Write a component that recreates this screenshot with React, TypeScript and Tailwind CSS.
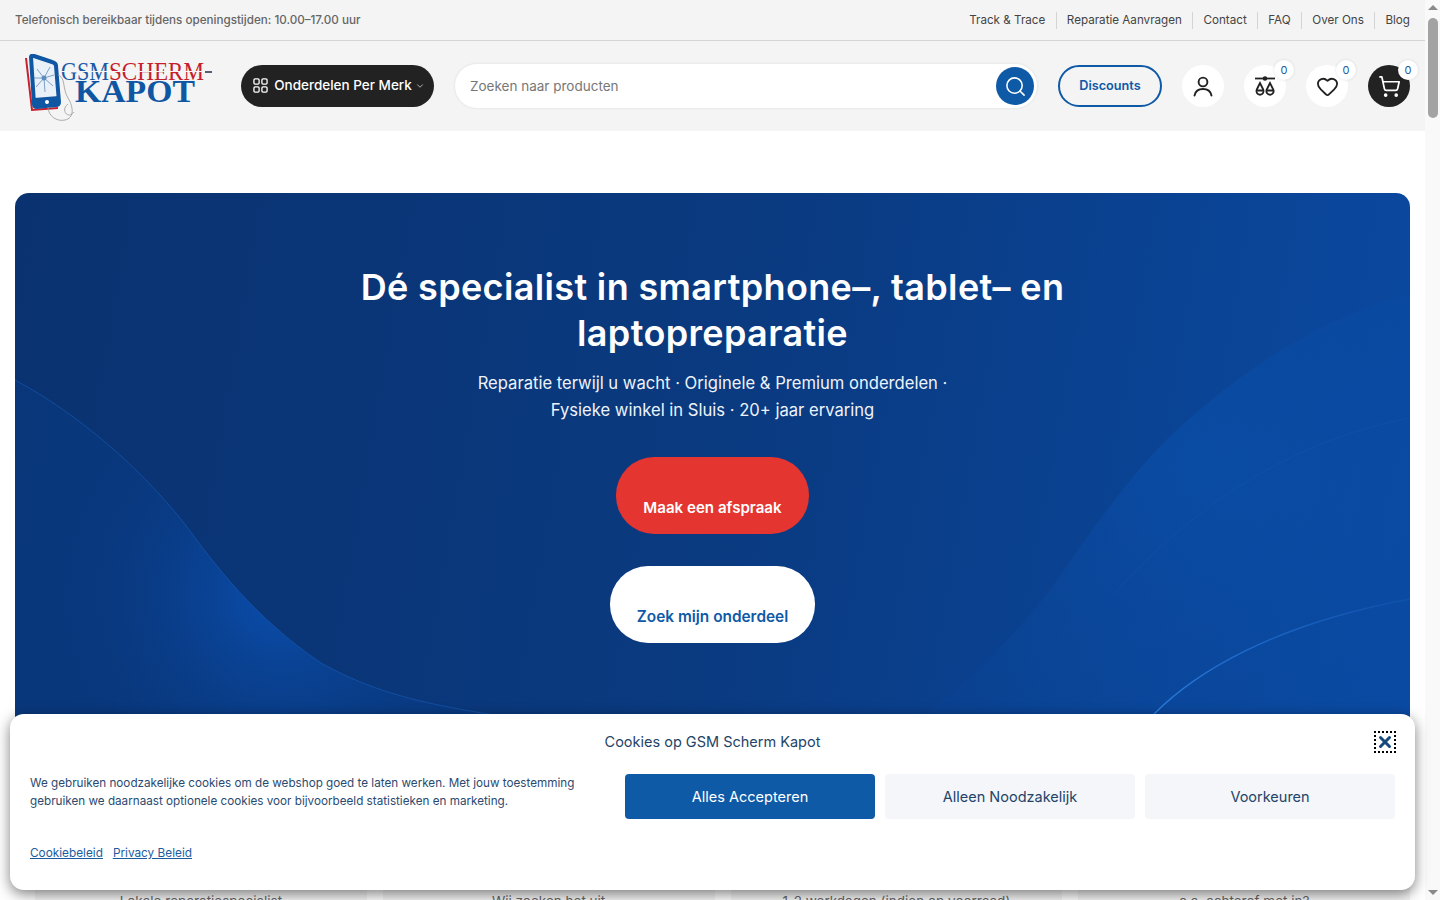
import { ChevronDown, Heart, Search, ShoppingCart, X } from "lucide-react";

const navLinks = ["Track & Trace", "Reparatie Aanvragen", "Contact", "FAQ", "Over Ons", "Blog"];

const Logo = () => (
  <svg width="190" height="70" viewBox="0 0 190 70" className="mt-[6px] shrink-0" aria-label="GSM Scherm Kapot">
    <path d="M2 4 L8 56 L34 54" fill="none" stroke="#c8202f" strokeWidth="2" />
    <path d="M7 3 Q7 1 10 2 L28 8 Q32 9 32 12 L35 48 Q35 51 32 51 L13 53 Q10 53 10 50 Z" fill="#e9f0f7" stroke="#0f56a3" strokeWidth="4" />
    <path d="M10 44 L35 42 L35 49 Q35 51 32 51 L13 53 Q10 53 10 50 Z" fill="#0f56a3" />
    <circle cx="23" cy="48" r="2" fill="#fff" />
    <path d="M20 24 L13 15 M20 24 L26 13 M20 24 L30 21 M20 24 L29 32 M20 24 L21 38 M20 24 L12 33 M20 24 L10 24" stroke="#4e7fb5" strokeWidth="0.7" />
    <circle cx="20" cy="24" r="2.5" fill="#5b8cc0" />
    <path d="M34 21 C42 24 38 34 44 44 C50 54 50 64 41 66 C33 68 24 62 24 53 M44 50 C36 56 44 66 50 58" fill="none" stroke="#9a9a9a" strokeWidth="0.8" />
    <text x="37" y="26" fontFamily="'Liberation Serif', serif" fontSize="25" fill="#1a5aa5" textLength="48" lengthAdjust="spacingAndGlyphs">GSM</text>
    <text x="85" y="26" fontFamily="'Liberation Serif', serif" fontSize="25" fill="#c41f2d" textLength="95" lengthAdjust="spacingAndGlyphs">SCHERM</text>
    <rect x="37" y="17" width="143" height="1" fill="#f4f4f4" />
    <rect x="181" y="17" width="7" height="2" fill="#55606e" />
    <text x="51" y="48" fontFamily="'Liberation Serif', serif" fontSize="31" fontWeight="700" fill="#0f56a3" textLength="120" lengthAdjust="spacingAndGlyphs">KAPOT</text>
  </svg>
);

const GridIcon = () => (
  <svg width="15" height="15" viewBox="0 0 16 16" fill="none" stroke="#fff" strokeWidth="1.4">
    <rect x="1" y="1" width="5.5" height="5.5" rx="1.2" />
    <rect x="9.5" y="1" width="5.5" height="5.5" rx="1.2" />
    <rect x="1" y="9.5" width="5.5" height="5.5" rx="1.2" />
    <rect x="9.5" y="9.5" width="5.5" height="5.5" rx="1.2" />
  </svg>
);

const UserIcon = () => (
  <svg width="22" height="22" viewBox="0 0 22 22" fill="none" stroke="#222" strokeWidth="1.9" strokeLinecap="round">
    <circle cx="11" cy="7" r="4.4" />
    <path d="M2.5 20.5 C3.5 15.5 7 14 11 14 C15 14 18.5 15.5 19.5 20.5" />
  </svg>
);

const CompareIcon = () => (
  <svg width="22" height="22" viewBox="0 0 22 22" fill="none" stroke="#222" strokeWidth="1.8">
    <path d="M1 3.5 H21" />
    <circle cx="11" cy="3.5" r="1.4" fill="#222" />
    <path d="M6 8 L2.8 14.5 A3.6 3.6 0 1 0 9.2 14.5 Z" />
    <path d="M16 8 L12.8 14.5 A3.6 3.6 0 1 0 19.2 14.5 Z" />
    <path d="M2.6 15.5 H9.4 M12.6 15.5 H19.4" />
  </svg>
);

const Badge = () => (
  <span className="absolute -top-[5px] -right-[8px] flex h-5 w-5 items-center justify-center rounded-full bg-white text-[11px] text-[#1b5c9e] shadow-[0_0_3px_rgba(0,0,0,0.12)]">0</span>
);

const RoundButton = ({ children, dark, badge }: { children: React.ReactNode; dark?: boolean; badge?: boolean }) => (
  <div className={`relative flex h-[42px] w-[42px] items-center justify-center rounded-full ${dark ? "bg-[#222222]" : "bg-white"}`}>
    {children}
    {badge && <Badge />}
  </div>
);

const HeroArt = () => (
  <svg className="absolute inset-0 h-full w-full" viewBox="0 0 1395 650" preserveAspectRatio="none" fill="none">
    <defs>
      <radialGradient id="glowLeft" gradientUnits="userSpaceOnUse" cx="265" cy="400" r="230">
        <stop offset="0" stopColor="#0a52b8" stopOpacity="0.85" />
        <stop offset="0.55" stopColor="#0a479e" stopOpacity="0.3" />
        <stop offset="1" stopColor="#0a3a80" stopOpacity="0" />
      </radialGradient>
      <radialGradient id="glowRight" gradientUnits="userSpaceOnUse" cx="1180" cy="270" r="420">
        <stop offset="0" stopColor="#0a55b5" stopOpacity="0.45" />
        <stop offset="1" stopColor="#0a4aa3" stopOpacity="0.05" />
      </radialGradient>
      <linearGradient id="arcFade" gradientUnits="userSpaceOnUse" x1="1139" y1="521" x2="1395" y2="406">
        <stop offset="0" stopColor="#2a7ce0" stopOpacity="1" />
        <stop offset="1" stopColor="#2474d8" stopOpacity="0.15" />
      </linearGradient>
    </defs>
    <path d="M0 187 C65 222 125 275 169 330 C200 372 240 425 306 470 C360 500 410 512 500 525 L0 525 Z" fill="#0a3f8c" fillOpacity="0.35" />
    <path d="M0 187 C65 222 125 275 169 330 C200 372 240 425 306 470 C360 500 410 512 500 525 L0 525 Z" fill="url(#glowLeft)" />
    <path d="M0 187 C65 222 125 275 169 330 C200 372 240 425 306 470 C360 500 410 512 500 525" stroke="#1a64c4" strokeOpacity="0.5" />
    <path d="M1395 102 C1330 118 1256 152 1164 235 C1120 275 1086 325 1040 390 C1000 445 950 490 900 530 L1395 530 Z" fill="url(#glowRight)" />
    <path d="M1395 225 C1290 245 1190 300 1100 400" stroke="#1a5fb8" strokeOpacity="0.25" />
    <path d="M1139 521 C1180 480 1256 432 1395 406" stroke="url(#arcFade)" strokeWidth="1.3" />
  </svg>
);

const ScrollBar = () => (
  <div className="flex h-[900px] w-[15px] shrink-0 flex-col items-center bg-[#f9f9f9]">
    <div className="mt-[5px] h-0 w-0 border-x-[5px] border-b-[5px] border-x-transparent border-b-[#8a8a8a]" />
    <div className="mt-[8px] h-[100px] w-[10px] rounded-full bg-[#a3a3a3]" />
    <div className="mt-auto mb-[5px] h-0 w-0 border-x-[5px] border-t-[5px] border-x-transparent border-t-[#8a8a8a]" />
  </div>
);

const CookieBanner = () => (
  <div className="absolute bottom-[10px] left-[10px] z-10 h-[176px] w-[1405px] rounded-[14px] bg-white px-5 font-['Inter',sans-serif] text-[#1e3a5f] shadow-[0_4px_14px_rgba(0,0,0,0.5)]">
    <div className="relative flex h-[55px] items-center justify-center text-[14.5px] text-[#234468]">
      Cookies op GSM Scherm Kapot
      <div className="absolute right-[-1px] top-[17px] flex h-[22px] w-[22px] items-center justify-center border-2 border-dotted border-black">
        <X size={18} strokeWidth={4} color="#174a7c" />
      </div>
    </div>
    <div className="flex items-start">
      <p className="mr-[35px] w-[560px] pt-[5px] text-[11.7px] leading-[18px] text-[#2b4a70]">
        We gebruiken noodzakelijke cookies om de webshop goed te laten werken. Met jouw toestemming gebruiken we daarnaast optionele cookies voor bijvoorbeeld statistieken en marketing.
      </p>
      <div className="mt-[5px] flex gap-[10px]">
        <button className="h-[45px] w-[250px] rounded-[4px] bg-[#0f5aa7] text-[14.5px] text-white">Alles Accepteren</button>
        <button className="h-[45px] w-[250px] rounded-[4px] bg-[#f4f6f9] text-[14.5px] text-[#234468]">Alleen Noodzakelijk</button>
        <button className="h-[45px] w-[250px] rounded-[4px] bg-[#f4f6f9] text-[14.5px] text-[#234468]">Voorkeuren</button>
      </div>
    </div>
    <div className="mt-[26px] flex gap-[10px] text-[11.8px] text-[#1b5c9e] underline">
      <a>Cookiebeleid</a>
      <a>Privacy Beleid</a>
    </div>
  </div>
);

export default function App() {
  return (
    <div className="relative flex h-[900px] w-[1440px] overflow-hidden bg-white font-['Inter',sans-serif]">
      <div className="w-[1425px] shrink-0">
        <div className="flex h-[41px] items-center justify-between border-b border-[#d4d4d4] bg-[#f4f4f4] px-[15px] pt-px text-[11.65px]">
          <span className="font-medium text-[#666666]">Telefonisch bereikbaar tijdens openingstijden: 10.00–17.00 uur</span>
          <div className="flex items-center text-[#444444]">
            {navLinks.map((link, i) => (
              <span key={link} className={`px-[10.3px] last:pr-0 ${i > 0 ? "border-l border-[#d4d4d4]" : ""}`}>{link}</span>
            ))}
          </div>
        </div>

        <div className="flex h-[90px] items-center bg-[#f4f4f4] pl-[24px] pr-[15px]">
          <Logo />
          <button className="ml-[27px] flex h-[42px] w-[193px] shrink-0 items-center justify-center gap-[6px] rounded-full bg-[#222222] pb-px pl-[3px] text-[13.5px] font-medium text-white">
            <GridIcon />
            Onderdelen Per Merk
            <ChevronDown size={10} color="#cccccc" className="-ml-[3px]" />
          </button>
          <div className="ml-[20px] flex h-[46px] w-[584px] items-center justify-between rounded-full border border-[#ececec] bg-white pl-[15px] pr-[3px] shadow-[0_0_2px_rgba(0,0,0,0.05)]">
            <span className="text-[13.5px] text-[#777777]">Zoeken naar producten</span>
            <div className="flex h-[38px] w-[38px] items-center justify-center rounded-full bg-[#0f5aa7]">
              <Search size={23} color="#fff" strokeWidth={1.6} />
            </div>
          </div>
          <button className="ml-[20px] h-[42px] w-[104px] rounded-full border-2 border-[#0f5aa7] text-[12.7px] font-semibold text-[#0f5aa7]">Discounts</button>
          <div className="ml-[20px] flex gap-[20px]">
            <RoundButton><UserIcon /></RoundButton>
            <RoundButton badge><CompareIcon /></RoundButton>
            <RoundButton badge><Heart size={23} color="#222" strokeWidth={1.9} /></RoundButton>
            <RoundButton dark badge><ShoppingCart size={23} color="#fff" strokeWidth={1.8} /></RoundButton>
          </div>
        </div>

        <div className="pt-[62px] pl-[15px] pr-[15px]">
          <div className="relative h-[650px] overflow-hidden rounded-[14px] bg-[linear-gradient(100deg,#0a3270_0%,#0a3a80_50%,#0a4aa3_100%)]">
            <HeroArt />
            <div className="relative flex flex-col items-center pt-[71px] text-center text-white">
              <h1 className="w-[760px] text-[36px] font-semibold leading-[46px] tracking-[0.35px]">Dé specialist in smartphone–, tablet– en laptopreparatie</h1>
              <p className="mt-[14px] w-[500px] text-[16.6px] leading-[27px] text-[#eef3fa]">Reparatie terwijl u wacht · Originele & Premium onderdelen · Fysieke winkel in Sluis · 20+ jaar ervaring</p>
              <div className="mt-[33px] flex flex-col items-center gap-[32px]">
                <a className="rounded-[38px] bg-[#e43530] px-[27.5px] pt-[39px] pb-[14px] text-[15.1px] font-semibold leading-[24px] text-white">Maak een afspraak</a>
                <a className="rounded-[38px] bg-white px-[27px] pt-[39px] pb-[14px] text-[15.4px] font-semibold leading-[24px] text-[#0f5aa7]">Zoek mijn onderdeel</a>
              </div>
            </div>
          </div>
        </div>

        <div className="mt-[17px] grid grid-cols-4 gap-[16px] pl-[35px] pr-[15px] text-center text-[13.5px] text-[#666666]">
          <div className="h-[60px] bg-[#f5f5f5] pt-[31px]">Lokale reparatiespecialist</div>
          <div className="h-[60px] bg-[#f5f5f5] pt-[31px]">Wij zoeken het uit</div>
          <div className="h-[60px] bg-[#f5f5f5] pt-[31px]">1-2 werkdagen (indien op voorraad)</div>
          <div className="h-[60px] bg-[#f5f5f5] pt-[31px]">o.a. achterof met in?</div>
        </div>
      </div>
      <ScrollBar />
      <CookieBanner />
    </div>
  );
}
